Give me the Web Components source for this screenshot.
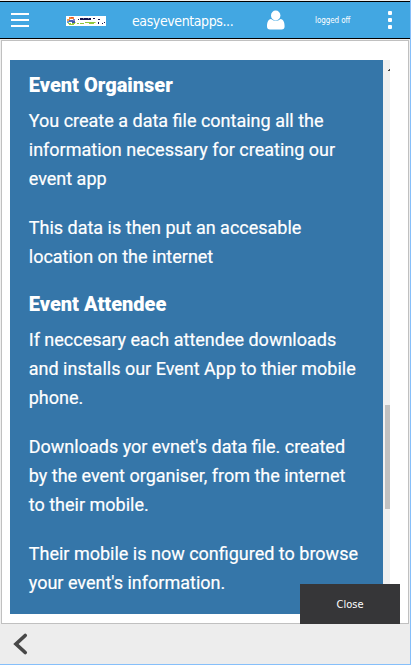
<!DOCTYPE html>
<html lang="en"><head><meta charset="utf-8"><title>easyeventapps</title>
<style>html,body{margin:0;height:100%;overflow:hidden}</style></head><body>
<event-app></event-app>
<script>
const define = (name, html) => customElements.define(name, class extends HTMLElement {
  constructor() { super(); this.attachShadow({mode: 'open'}).innerHTML = html; }
});

define('app-logo', `<style>:host{display:block;width:40px;height:10px}svg{display:block}</style>
<svg width="40" height="10" shape-rendering="crispEdges"><rect width="40" height="10" fill="#fff"/>
<path d="M3 1h5v2H3z" fill="#f58232"/><path d="M5 1h2v1H5z" fill="#e8482c"/><path d="M1 3h3v2H1z" fill="#f5a050"/><path d="M7 3h2v2H7z" fill="#8c7bc0"/><path d="M3 4h4v2H3z" fill="#4a62b8"/><path d="M1 5h2v2H1z" fill="#6a9fd0"/><path d="M6 5h3v2H6z" fill="#3d55a8"/><path d="M2 7h3v1H2zM6 7h3v1H6zM3 8h5v1H3z" fill="#9ccc3c"/><path d="M9 6h1v1H9z" fill="#d6e876"/>
<path d="M12 3h1v1h-1zM14 2h11v2H14zM27 2h2v1h-2zM32 3h2v1h-2zM32 6h1v2h-1zM36 7h1v1h-1zM38 6h1v1h-1z" fill="#171650"/><path d="M17 2h1v1h-1zM22 2h1v1h-1z" fill="#77779b"/>
<path d="M11 7h2v1h-2zM14 7h4v1h-4zM19 6h10v1H19zM23 7h5v1h-5z" fill="#92c83e"/><path d="M29 6h1v1h-1z" fill="#d6e876"/></svg>`);

define('app-header', `<style>
:host{display:grid;grid-template-columns:11px 55px 66px 135px 48px 72px 1fr;align-items:center;height:36px;background:#42a7e2;border-top:1px solid #000;border-bottom:1px solid #000;color:#fff;font-family:"DejaVu Sans Condensed","DejaVu Sans",sans-serif;font-stretch:condensed}
svg{display:block}.title{font-size:14px;letter-spacing:-.4px;line-height:20px;padding-top:2px;white-space:nowrap}.status{font-size:8px;letter-spacing:-.1px;line-height:12px;padding-top:1px;white-space:nowrap}app-logo{position:relative;top:1px}
</style><span></span>
<svg width="18" height="16" fill="#fff"><path d="M0 1h18v2H0zM0 7h18v2H0zM0 13h18v2H0z"/></svg>
<app-logo></app-logo><span class="title">easyeventapps...</span>
<svg width="18" height="20" fill="#fff"><ellipse cx="8.7" cy="5.5" rx="4.7" ry="5"/><path d="M4 9C1 9 0 13 0 16.2Q0 19.5 3 19.5H14.5Q17.6 19.5 17.6 16.2C17.6 13 16.6 9 13.5 9Q9 12.7 4 9z"/></svg>
<span class="status">logged off</span>
<svg width="4" height="18" fill="#fff" style="margin-left:1px"><rect width="4" height="4" rx="1"/><rect y="7" width="4" height="4" rx="1"/><rect y="14" width="4" height="4" rx="1"/></svg>`);

define('event-article', `<style>
:host{display:block;box-sizing:border-box;width:373px;height:554px;background:#3576a9;color:#fff;padding:10px 0 0 18.75px;font:18px/29px Roboto,sans-serif;white-space:nowrap;-webkit-text-stroke:.2px #fff}
::slotted(h2){margin:0 0 6px;font-size:20px;font-weight:900;letter-spacing:0;line-height:30px;-webkit-text-stroke:0}
::slotted(p){margin:0 0 20px}::slotted(p.last){margin-bottom:18px}</style><slot></slot>`);

define('scroll-track', `<style>:host{display:flex;flex-direction:column;width:7px;height:554px;background:#f0f0f0;align-items:flex-end}
.gap{height:345px}.thumb{width:5px;height:104px;background:#c1c1c1}svg{display:block}</style>
<div class="gap"><svg width="2" height="12"><path d="M0 10h1V9h1v2H0z" fill="#444"/></svg></div><div class="thumb"></div>`);

define('close-button', `<style>:host{display:block}button{display:block;width:100px;height:40px;border:0;border-radius:0;padding:1px 0 0;background:#363638;color:#fff;font:11px/16px "DejaVu Sans Condensed","DejaVu Sans",sans-serif;font-stretch:condensed}</style><button><slot></slot></button>`);

define('back-bar', `<style>:host{display:flex;height:40px;background:#ededed;border-bottom:1px solid #86bffa;padding-left:13px;align-items:center}svg{display:block}</style>
<svg width="16" height="24"><path d="M12.2 3.5L3 12L12.2 20.5" fill="none" stroke="#484848" stroke-width="3.7" stroke-linecap="round"/></svg>`);

define('event-app', `<style>
:host{display:flex;flex-direction:column;position:relative;box-sizing:border-box;width:411px;height:665px;padding-top:1px;border-right:1px solid #86bffa;background:#efefef}
main{display:flex;box-sizing:border-box;width:408px;height:584px;margin:1px 0 0 1px;border:1px solid #c0c0c0;padding:19px 0 0 8px;background:#fff}
close-button{position:absolute;left:300px;top:584px}</style>
<app-header></app-header>
<main><event-article>
<h2>Event Orgainser</h2>
<p>You create a data file containg all the<br>information necessary for creating our<br>event app</p>
<p class="last">This data is then put an accesable<br>location on the internet</p>
<h2>Event Attendee</h2>
<p>If neccesary each attendee downloads<br>and installs our Event App to thier mobile<br>phone.</p>
<p>Downloads yor evnet's data file. created<br>by the event organiser, from the internet<br>to their mobile.</p>
<p>Their mobile is now configured to browse<br>your event's information.</p>
</event-article><scroll-track></scroll-track></main>
<back-bar></back-bar><close-button>Close</close-button>`);
</script></body></html>
